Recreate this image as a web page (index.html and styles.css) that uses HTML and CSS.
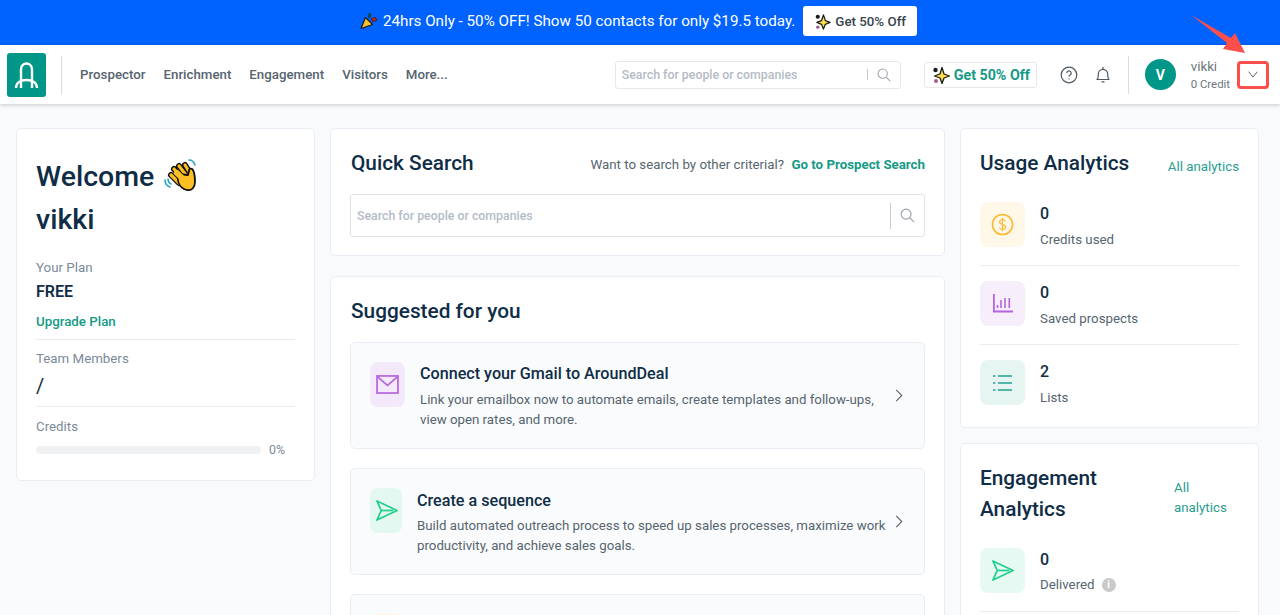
FILE: index.html
```html
<!DOCTYPE html>
<html lang="en">

<head>
    <meta charset="UTF-8">
    <meta name="viewport" content="width=device-width, initial-scale=1.0">
    <title>AroundDeal Dashboard</title>
    <link rel="stylesheet" href="styles.css">
</head>

<body>
    <!-- Promo banner -->
    <div class="promo">
        <svg class="promo-icon" viewBox="0 0 18 18" width="18" height="18">
            <path d="M1 16.500 5.500 5.500 12.500 12.500Z" fill="#fbc02d" stroke="#1b1b1b" stroke-width="1.200" stroke-linejoin="round" />
            <path d="M8 3 10 1 11 4 9 6Z" fill="#0b6b5e" stroke="#1b1b1b" stroke-width=".7" />
            <path d="M11 7 15 5 17 8 13 10Z" fill="#b3261e" stroke="#1b1b1b" stroke-width=".7" />
        </svg>
        <span class="promo-text">24hrs Only - 50% OFF! Show 50 contacts for only $19.5 today.</span>
        <a class="promo-btn" href="#">
            <svg viewBox="0 0 18 18" width="17" height="17">
                <path d="M10 2 12 8 17 10 12 12 10 17 8 12 3 10 8 8Z" fill="#fde047" stroke="#1b1b1b" stroke-width="1.300" stroke-linejoin="round" />
                <circle cx="4" cy="4" r="2.200" fill="#1b1b1b" />
                <circle cx="4" cy="15" r="1.800" fill="#a35d8c" />
            </svg>
            Get 50% Off
        </a>
    </div>

    <!-- Top navigation -->
    <header class="topbar">
        <div class="logo">
            <svg viewBox="0 0 39 44" width="39" height="44" fill="none" stroke="#fff" stroke-width="2.400">
                <path d="M14 35V16a5.500 5.500 0 0 1 11 0V35" />
                <path d="M9 35c0-5 4-8 10.500-8S30 30 30 35" />
            </svg>
        </div>
        <nav class="main-nav">
            <a href="#">Prospector</a>
            <a href="#">Enrichment</a>
            <a href="#">Engagement</a>
            <a href="#">Visitors</a>
            <a href="#">More...</a>
        </nav>
        <div class="top-search">
            <span class="top-search-text">Search for people or companies</span>
            <span class="search-sep"></span>
            <svg viewBox="0 0 16 16" width="14" height="14" fill="none" stroke="#9aa1a9" stroke-width="1.200">
                <circle cx="6.500" cy="6.500" r="5.300" />
                <path d="M10.500 10.500 15 15" />
            </svg>
        </div>
        <a class="top-offer" href="#">
            <svg viewBox="0 0 18 18" width="18" height="18">
                <path d="M10 1.500 12 8 17.500 10 12 12 10 17.500 8 12 2.500 10 8 8Z" fill="#fde047" stroke="#1b1b1b" stroke-width="1.300" stroke-linejoin="round" />
                <circle cx="3.500" cy="4" r="2.200" fill="#1b1b1b" />
                <circle cx="4" cy="15" r="2" fill="#a35d8c" />
            </svg>
            Get 50% Off
        </a>
        <svg class="top-icon-help" viewBox="0 0 18 18" width="18" height="18" fill="none" stroke="#4e5b63" stroke-width="1.200">
            <circle cx="9" cy="9" r="7.800" />
            <path d="M6.800 7.200a2.200 2.200 0 1 1 3.400 1.800c-.8.5-1.200 1-1.200 1.800" />
            <path d="M9 12.400v1.200" />
        </svg>
        <svg class="top-icon-bell" viewBox="0 0 16 18" width="16" height="18" fill="none" stroke="#4e5b63" stroke-width="1.200">
            <path d="M2 13.500c1-1 1.300-2 1.300-4V8a4.700 4.700 0 0 1 9.400 0v1.500c0 2 .3 3 1.300 4Z" stroke-linejoin="round" />
            <path d="M6.500 15.800h3M8 1v2" />
        </svg>
        <span class="top-sep"></span>
        <div class="avatar">V</div>
        <div class="user">
            <div class="user-name">vikki</div>
            <div class="user-credit">0 Credit</div>
        </div>
        <div class="user-toggle">
            <svg viewBox="0 0 10 7" width="10" height="7" fill="none" stroke="#59656c" stroke-width="1">
                <path d="M.7 .7 5 6 9.300 .7" />
            </svg>
        </div>
    </header>

    <!-- Annotation arrow from the screenshot -->
    <svg class="arrow" viewBox="0 0 60 40" width="60" height="40">
        <path d="M1 1 41 24 45 19 55 39 33 35 37 29Z" fill="#fb4f4b" />
    </svg>

    <main class="dashboard">
        <aside class="col-left">
            <section class="card welcome">
                <h1>Welcome
                    <svg class="wave" viewBox="0 0 34 34" width="34" height="34" fill="none" stroke-linecap="round">
                        <path d="M7 16 15 24M10 10 19 20M15 7 22 16M21 6 26 14" stroke="#111" stroke-width="6" />
                        <path d="M7 16 15 24M10 10 19 20M15 7 22 16M21 6 26 14" stroke="#fbbf24" stroke-width="3.200" />
                        <path d="M14 15c-1 7 1 14 9 16 5 1 8-3 8-8 0-4 0-8-2-12-1-2-4-2-4 1l-1 4Z" fill="#fbbf24" stroke="#111" stroke-width="1.800" stroke-linejoin="round" />
                        <path d="M13 14 22 23" stroke="#fbbf24" stroke-width="6" />
                        <path d="M25 1c3 0 5 2 6 5M1 21c0 3 2 6 5 7M4 20c0 2 1 4 3 5" stroke="#2aa3c5" stroke-width="1.600" />
                    </svg>
                </h1>
                <div class="welcome-name">vikki</div>
                <div class="stat-label">Your Plan</div>
                <div class="plan">FREE</div>
                <a class="upgrade" href="#">Upgrade Plan</a>
                <hr class="welcome-rule">
                <div class="stat-label">Team Members</div>
                <div class="team">/</div>
                <hr class="welcome-rule">
                <div class="stat-label">Credits</div>
                <div class="credit-row">
                    <div class="credit-track"></div>
                    <span>0%</span>
                </div>
            </section>
        </aside>

        <div class="col-middle">
            <section class="card quick">
                <div class="quick-head">
                    <h2>Quick Search</h2>
                    <p>Want to search by other criterial? <a href="#">Go to Prospect Search</a></p>
                </div>
                <div class="quick-search">
                    <span>Search for people or companies</span>
                    <span class="quick-sep"></span>
                    <svg viewBox="0 0 16 16" width="15" height="15" fill="none" stroke="#9aa1a9" stroke-width="1.200">
                        <circle cx="6.500" cy="6.500" r="5.300" />
                        <path d="M10.500 10.500 15 15" />
                    </svg>
                </div>
            </section>

            <section class="card suggested">
                <h2>Suggested for you</h2>

                <div class="task">
                    <div class="task-icon task-icon-mail">
                        <svg viewBox="0 0 24 20" width="23" height="19" fill="none" stroke="#b565dd" stroke-width="1.800">
                            <rect x="1" y="1" width="22" height="18" />
                            <path d="M1 1.500 12 11 23 1.500" />
                        </svg>
                    </div>
                    <div class="task-body">
                        <h3>Connect your Gmail to AroundDeal</h3>
                        <p>Link your emailbox now to automate emails, create templates and follow-ups, view open rates, and more.</p>
                    </div>
                    <svg class="task-arrow" viewBox="0 0 8 14" width="8" height="13" fill="none" stroke="#59656c" stroke-width="1.200">
                        <path d="M1 1 7 7 1 13" />
                    </svg>
                </div>

                <div class="task">
                    <div class="task-icon task-icon-send">
                        <svg viewBox="0 0 24 24" width="23" height="23" fill="none" stroke="#1fd08c" stroke-width="1.800" stroke-linejoin="round">
                            <path d="M2 2 23 12 2 22 6.500 12Z" />
                            <path d="M6.500 12H19" />
                        </svg>
                    </div>
                    <div class="task-body">
                        <h3>Create a sequence</h3>
                        <p>Build automated outreach process to speed up sales processes, maximize work productivity, and achieve sales goals.</p>
                    </div>
                    <svg class="task-arrow" viewBox="0 0 8 14" width="8" height="13" fill="none" stroke="#59656c" stroke-width="1.200">
                        <path d="M1 1 7 7 1 13" />
                    </svg>
                </div>

                <div class="task">
                    <div class="task-icon task-icon-third"></div>
                </div>
            </section>
        </div>

        <aside class="col-right">
            <section class="card analytics analytics-usage">
                <div class="analytics-head">
                    <h2>Usage Analytics</h2>
                    <a href="#">All analytics</a>
                </div>
                <div class="metric">
                    <div class="metric-icon metric-icon-credit">
                        <svg viewBox="0 0 24 24" width="23" height="23" fill="none" stroke="#fbb931" stroke-width="1.600">
                            <circle cx="12" cy="12" r="10.500" />
                            <path d="M15 8.500c-.6-1.200-1.600-1.700-3-1.700-1.800 0-3 1-3 2.500 0 3.500 6.200 1.800 6.200 5.300 0 1.500-1.300 2.600-3.200 2.600-1.500 0-2.600-.6-3.200-1.800M12 5v14" stroke-width="1.200" />
                        </svg>
                    </div>
                    <div class="metric-text">
                        <div class="metric-value">0</div>
                        <div class="metric-label">Credits used</div>
                    </div>
                </div>
                <div class="metric">
                    <div class="metric-icon metric-icon-saved">
                        <svg viewBox="0 0 20 19" width="20" height="19" fill="none" stroke="#b565dd">
                            <path d="M.9 0V17.500H20" stroke-width="1.800" />
                            <path d="M4.500 11V14M8 6V14M12 4V14M16.300 4V14" stroke-width="1.600" />
                        </svg>
                    </div>
                    <div class="metric-text">
                        <div class="metric-value">0</div>
                        <div class="metric-label">Saved prospects</div>
                    </div>
                </div>
                <div class="metric">
                    <div class="metric-icon metric-icon-list">
                        <svg viewBox="0 0 19 16" width="19" height="16" fill="none" stroke="#23a08f" stroke-width="1.500">
                            <path d="M5 1h14M5 8h14M5 15h14M0 1h2.300M0 8h2.300M0 15h2.300" />
                        </svg>
                    </div>
                    <div class="metric-text">
                        <div class="metric-value">2</div>
                        <div class="metric-label">Lists</div>
                    </div>
                </div>
            </section>

            <section class="card analytics">
                <div class="analytics-head engagement-head">
                    <h2>Engagement Analytics</h2>
                    <a href="#">All analytics</a>
                </div>
                <div class="metric">
                    <div class="metric-icon metric-icon-send">
                        <svg viewBox="0 0 24 24" width="23" height="23" fill="none" stroke="#1fd08c" stroke-width="1.800" stroke-linejoin="round">
                            <path d="M2 2 23 12 2 22 6.500 12Z" />
                            <path d="M6.500 12H19" />
                        </svg>
                    </div>
                    <div class="metric-text">
                        <div class="metric-value">0</div>
                        <div class="metric-label metric-label-info">Delivered <span class="info">i</span></div>
                    </div>
                </div>
            </section>
        </aside>
    </main>
</body>

</html>
```

FILE: styles.css
```css
/* Reset default */
body,
h1,
h2,
h3,
p {
    margin: 0;
    padding: 0;
    box-sizing: border-box;
}

html,
body {
    height: 615px;
    overflow: hidden;
}

body {
    position: relative;
    background-color: #f9fafb;
    color: #0f2d46;
    font-family: Roboto, "Liberation Sans", sans-serif;
}

a {
    text-decoration: none;
}

/* Promo banner */
.promo {
    height: 45px;
    box-sizing: border-box;
    background-color: #0062ff;
    display: flex;
    align-items: center;
    justify-content: center;
    padding: 0 3px 3px 0;
    color: white;
    font-size: 15.2px;
}

.promo-icon {
    margin-right: 5px;
}

.promo-btn {
    margin-left: 8px;
    height: 30px;
    padding: 0 11px;
    background-color: white;
    border-radius: 3px;
    display: flex;
    align-items: center;
    gap: 4px;
    color: #37444c;
    font-size: 13.3px;
    font-weight: 500;
}

/* Top navigation */
.topbar {
    height: 59px;
    box-sizing: border-box;
    background-color: white;
    box-shadow: 0 1px 4px rgba(0, 0, 0, 0.2);
    display: flex;
    align-items: center;
    padding-left: 7px;
}

.logo {
    width: 39px;
    height: 44px;
    background-color: #009688;
    border-radius: 3px;
    display: flex;
    align-items: center;
    justify-content: center;
}

.main-nav {
    margin-left: 15px;
    padding-left: 18px;
    height: 38px;
    border-left: 1px solid #dcdcdc;
    display: flex;
    align-items: center;
    gap: 18px;
    font-size: 13.3px;
    font-weight: 500;
}

.main-nav a {
    color: #56656f;
}

.top-search {
    margin-left: 167px;
    width: 286px;
    height: 28px;
    box-sizing: border-box;
    border: 1px solid #e6e8eb;
    border-radius: 3px;
    display: flex;
    align-items: center;
    padding: 0 9px 0 6px;
}

.top-search-text {
    flex-grow: 1;
    color: #b4bcc6;
    font-size: 12.35px;
    font-weight: 500;
}

.search-sep {
    width: 1px;
    height: 11px;
    background-color: #c8ccd0;
    margin-right: 9px;
}

.top-offer {
    margin-left: 23px;
    width: 113px;
    height: 26px;
    box-sizing: border-box;
    border: 1px solid #e6e8eb;
    border-radius: 3px;
    display: flex;
    align-items: center;
    padding-left: 7px;
    gap: 4px;
    color: #149a85;
    font-size: 14.25px;
    font-weight: 700;
}

.top-icon-help {
    margin-left: 23px;
}

.top-icon-bell {
    margin-left: 17px;
}

.top-sep {
    margin-left: 17px;
    width: 1px;
    height: 38px;
    background-color: #dcdcdc;
}

.avatar {
    margin-left: 16px;
    width: 31px;
    height: 31px;
    border-radius: 50%;
    background-color: #009688;
    color: white;
    display: flex;
    align-items: center;
    justify-content: center;
    font-size: 14px;
    font-weight: 700;
}

.user {
    margin-left: 15px;
    width: 46px;
}

.user-name {
    color: #6a767e;
    font-size: 13.3px;
    line-height: 19px;
}

.user-credit {
    color: #6a767e;
    font-size: 11.4px;
    line-height: 17px;
}

.user-toggle {
    width: 32px;
    height: 28px;
    box-sizing: border-box;
    border: 3px solid #fb4f4b;
    border-radius: 4px;
    display: flex;
    align-items: center;
    justify-content: center;
}

.arrow {
    position: absolute;
    left: 1190px;
    top: 14px;
}

/* Dashboard columns */
.dashboard {
    display: grid;
    grid-template-columns: 299px 615px 299px;
    gap: 15px;
    height: 487px;
    overflow: hidden;
    padding: 24px 0 0 16px;
    align-items: start;
}

.card {
    box-sizing: border-box;
    background-color: white;
    border: 1px solid #e9eef5;
    border-radius: 5px;
}

.col-middle,
.col-right {
    display: flex;
    flex-direction: column;
    gap: 20px;
}

.col-right {
    gap: 15px;
}

/* Welcome card */
.welcome {
    height: 353px;
    padding: 23px 19px 0;
}

.welcome h1 {
    height: 48px;
    display: flex;
    align-items: center;
    gap: 10px;
    font-size: 28.5px;
    font-weight: 500;
    color: #0f2d46;
}

.welcome-name {
    font-size: 28.5px;
    line-height: 40px;
    font-weight: 500;
    margin-bottom: 19px;
}

.stat-label {
    color: #7a8a9a;
    font-size: 13.3px;
    line-height: 18px;
}

.plan {
    margin-top: 5px;
    font-size: 16px;
    line-height: 20px;
    font-weight: 600;
}

.upgrade {
    display: block;
    margin-top: 11px;
    color: #149a85;
    font-size: 13.3px;
    line-height: 18px;
    font-weight: 500;
}

.welcome-rule {
    margin: 8px 0 10px;
    border: 0;
    border-top: 1px solid #e9ecf0;
}

.team {
    margin-top: 6px;
    margin-bottom: 4px;
    font-size: 20px;
    line-height: 24px;
}

.team + .welcome-rule {
    margin-bottom: 11px;
}

.credit-row {
    margin-top: 7px;
    display: flex;
    align-items: center;
    gap: 8px;
    color: #7a8a9a;
    font-size: 12.35px;
}

.credit-track {
    width: 225px;
    height: 8px;
    background-color: #f0f1f3;
    border-radius: 4px;
}

/* Quick search */
.quick {
    height: 128px;
    padding: 19px 19px 0;
}

.quick-head {
    display: flex;
    align-items: center;
    justify-content: space-between;
}

h2 {
    font-size: 20.8px;
    line-height: 30px;
    font-weight: 500;
    color: #0f2d46;
}

.col-middle h2 {
    margin-left: 1px;
}

.quick-head p {
    margin-top: 2px;
    color: #56656f;
    font-size: 13.3px;
}

.quick-head a {
    margin-left: 4px;
    color: #149a85;
    font-weight: 700;
    font-size: 13.3px;
}

.quick-search {
    margin-top: 16px;
    height: 43px;
    box-sizing: border-box;
    border: 1px solid #dfe3e8;
    border-radius: 3px;
    display: flex;
    align-items: center;
    padding: 0 9px 0 6px;
    color: #b4bcc6;
    font-size: 12.35px;
    font-weight: 500;
}

.quick-search span:first-child {
    flex-grow: 1;
}

.quick-sep {
    width: 1px;
    height: 26px;
    background-color: #c8ccd0;
    margin-right: 9px;
}

/* Suggested tasks */
.suggested {
    padding: 19px 19px 0;
    height: 400px;
}

.task {
    margin-top: 16px;
    height: 107px;
    box-sizing: border-box;
    border: 1px solid #e9eef5;
    border-radius: 5px;
    background-color: #fafbfc;
    display: flex;
    align-items: flex-start;
    padding: 19px 21px 0 19px;
}

.task + .task {
    margin-top: 19px;
}

.task-icon {
    flex-shrink: 0;
    height: 45px;
    border-radius: 8px;
    display: flex;
    align-items: center;
    justify-content: center;
}

.task-icon-mail {
    width: 35px;
    background-color: #f4e9fa;
}

.task-icon-send {
    width: 32px;
    background-color: #e3f8f0;
}

.task-icon-third {
    width: 35px;
    background-color: #fff5e0;
}

.task-body {
    margin-left: 15px;
    flex-grow: 1;
}

.task h3 {
    margin-top: 1px;
    font-size: 16.15px;
    line-height: 22px;
    font-weight: 500;
    color: #0f2d46;
}

.task-icon-send + .task-body h3 {
    margin-top: 2px;
}

.task p {
    margin-top: 5px;
    color: #56656f;
    font-size: 13.27px;
    line-height: 20px;
}

.task-icon-send + .task-body p {
    margin-top: 4px;
}

.task-arrow {
    flex-shrink: 0;
    margin-top: 27px;
    margin-left: 4px;
}

/* Analytics cards */
.analytics {
    padding: 19px 19px 0;
    height: 300px;
}

.analytics-head {
    display: flex;
    align-items: center;
    justify-content: space-between;
    margin-bottom: 24px;
}

.analytics-head a {
    margin-top: 7px;
    color: #2a9d8f;
    font-size: 13.3px;
    line-height: 20px;
}

.engagement-head {
    margin-bottom: 23px;
}

.engagement-head h2 {
    width: 170px;
    line-height: 31px;
}

.engagement-head a {
    width: 65px;
}

.metric {
    display: flex;
    height: 64px;
    box-sizing: border-box;
    border-bottom: 1px solid #e9ecf0;
    margin-bottom: 15px;
}

.analytics-usage .metric:last-child {
    border-bottom: 0;
}

.metric-icon {
    width: 45px;
    height: 45px;
    border-radius: 8px;
    display: flex;
    align-items: center;
    justify-content: center;
}

.metric-icon-credit {
    background-color: #fff7e8;
}

.metric-icon-saved {
    background-color: #f6eefb;
}

.metric-icon-list {
    background-color: #e6f4f2;
}

.metric-icon-send {
    background-color: #e6faf3;
}

.metric-text {
    margin-left: 15px;
    padding-top: 1px;
}

.metric-value {
    font-size: 16px;
    line-height: 22px;
    font-weight: 500;
    color: #0f2d46;
}

.metric-label {
    margin-top: 5px;
    color: #56656f;
    font-size: 13.3px;
    line-height: 20px;
    display: flex;
    align-items: center;
    gap: 7px;
}

.metric-label-info {
    margin-top: 4px;
}

.info {
    width: 14px;
    height: 14px;
    border-radius: 50%;
    background-color: #c9c9c9;
    color: white;
    font-size: 10px;
    font-weight: 700;
    display: flex;
    align-items: center;
    justify-content: center;
}
```
